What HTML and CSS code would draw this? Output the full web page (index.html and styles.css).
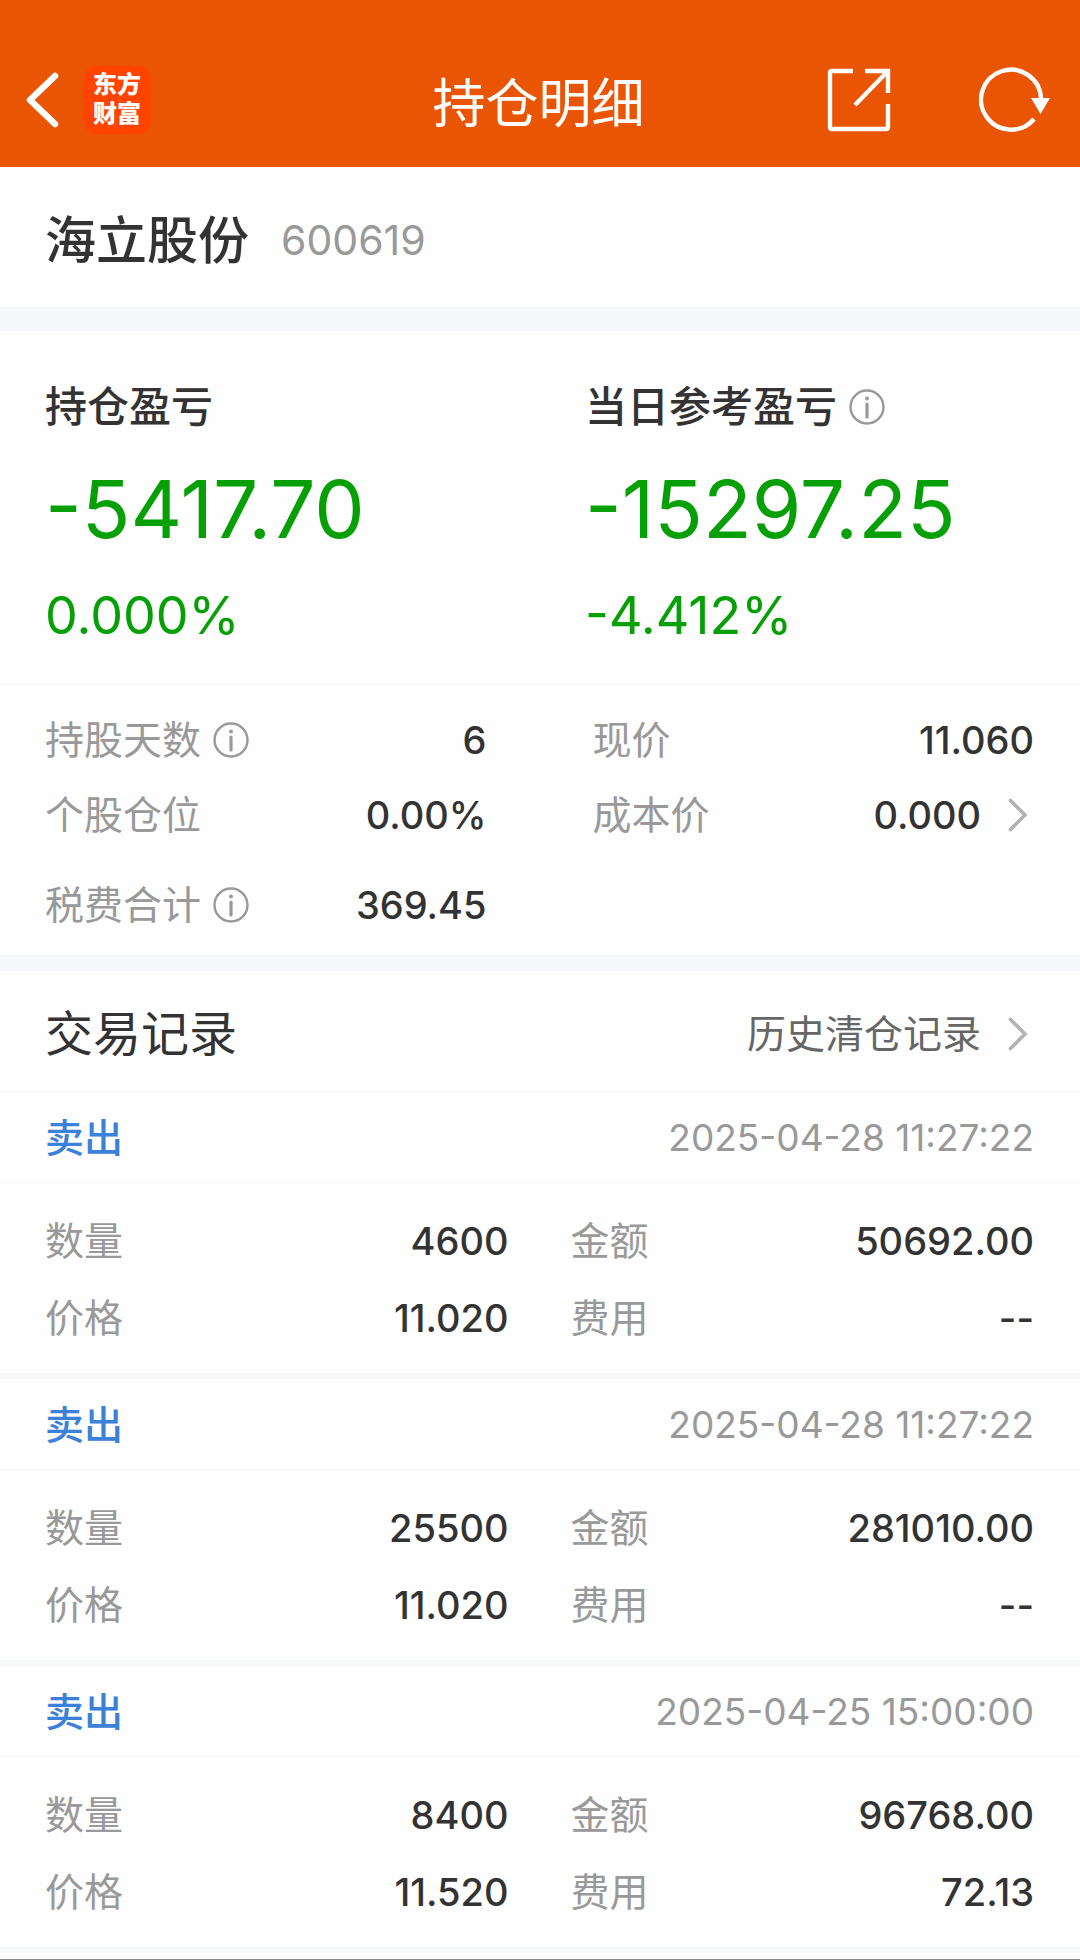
FILE: index.html
```html
<!DOCTYPE html>
<html lang="zh-CN">
<head>
    <meta charset="UTF-8">
    <meta name="viewport" content="width=device-width, initial-scale=1.0">
    <title>持仓明细</title>
    <link rel="stylesheet" href="styles.css">
</head>
<body>
    <!-- Shared icons -->
    <svg class="sprite" aria-hidden="true">
        <symbol id="icon-info" viewBox="0 0 36 36">
            <circle cx="18" cy="18" r="16.5" fill="none" stroke="currentColor" stroke-width="2.4"/>
            <circle cx="18" cy="9.5" r="2" fill="currentColor"/>
            <path d="M18 15v13" fill="none" stroke="currentColor" stroke-width="3.2" stroke-linecap="round"/>
        </symbol>
        <symbol id="icon-arrow" viewBox="0 0 20 34">
            <path d="M2.5 2.5L17 17L2.5 31.5" fill="none" stroke="currentColor" stroke-width="3.6" stroke-linecap="round"/>
        </symbol>
    </svg>

    <header class="navbar">
        <div class="nav-left">
            <button class="icon-btn" aria-label="返回">
                <svg width="34" height="56" viewBox="0 0 34 56">
                    <path d="M29 4L4 28L29 52" fill="none" stroke="#fff" stroke-width="6.5" stroke-linecap="round" stroke-linejoin="round"/>
                </svg>
            </button>
            <div class="logo">东方<br>财富</div>
        </div>
        <h1 class="nav-title">持仓明细</h1>
        <div class="nav-right">
            <button class="icon-btn" aria-label="分享">
                <svg width="64" height="64" viewBox="0 0 64 64" fill="none" stroke="#fff" stroke-width="4.4">
                    <path d="M26 3H5Q3 3 3 5V59Q3 61 5 61H59Q61 61 61 59V36"/>
                    <path d="M38 3H61V25M60 4L28 37"/>
                </svg>
            </button>
            <button class="icon-btn" aria-label="刷新">
                <svg width="72" height="66" viewBox="0 0 72 66">
                    <path d="M55 52A30 30 0 1 1 62 31" fill="none" stroke="#fff" stroke-width="4.4"/>
                    <path d="M52 31H71L61.500 47Z" fill="#fff"/>
                </svg>
            </button>
        </div>
    </header>

    <main>
        <section class="stock">
            <h2 class="stock-name">海立股份</h2>
            <span class="stock-code">600619</span>
        </section>

        <section class="summary">
            <div class="profit">
                <div class="profit-label">持仓盈亏</div>
                <div class="profit-value">-5417.70</div>
                <div class="profit-rate">0.000%</div>
            </div>
            <div class="profit">
                <div class="profit-label">当日参考盈亏
                    <button class="icon-btn info" aria-label="当日参考盈亏说明"><svg><use href="#icon-info"/></svg></button>
                </div>
                <div class="profit-value">-15297.25</div>
                <div class="profit-rate">-4.412%</div>
            </div>
        </section>

        <dl class="details">
            <div class="item">
                <dt>持股天数 <button class="icon-btn info" aria-label="持股天数说明"><svg><use href="#icon-info"/></svg></button></dt>
                <dd>6</dd>
            </div>
            <div class="item">
                <dt>现价</dt>
                <dd>11.060</dd>
            </div>
            <div class="item">
                <dt>个股仓位</dt>
                <dd>0.00%</dd>
            </div>
            <div class="item">
                <dt>成本价</dt>
                <dd><a class="more" href="#cost">0.000 <svg class="arrow"><use href="#icon-arrow"/></svg></a></dd>
            </div>
            <div class="item total">
                <dt>税费合计 <button class="icon-btn info" aria-label="税费合计说明"><svg><use href="#icon-info"/></svg></button></dt>
                <dd>369.45</dd>
            </div>
        </dl>

        <section class="records">
            <div class="records-head">
                <h2 class="records-title">交易记录</h2>
                <a class="more history" href="#history">历史清仓记录 <svg class="arrow"><use href="#icon-arrow"/></svg></a>
            </div>

            <article class="record">
                <div class="record-head">
                    <span class="side">卖出</span>
                    <time>2025-04-28 11:27:22</time>
                </div>
                <dl class="record-data">
                    <div class="item"><dt>数量</dt><dd>4600</dd></div>
                    <div class="item"><dt>金额</dt><dd>50692.00</dd></div>
                    <div class="item"><dt>价格</dt><dd>11.020</dd></div>
                    <div class="item"><dt>费用</dt><dd>--</dd></div>
                </dl>
            </article>

            <article class="record">
                <div class="record-head">
                    <span class="side">卖出</span>
                    <time>2025-04-28 11:27:22</time>
                </div>
                <dl class="record-data">
                    <div class="item"><dt>数量</dt><dd>25500</dd></div>
                    <div class="item"><dt>金额</dt><dd>281010.00</dd></div>
                    <div class="item"><dt>价格</dt><dd>11.020</dd></div>
                    <div class="item"><dt>费用</dt><dd>--</dd></div>
                </dl>
            </article>

            <article class="record">
                <div class="record-head">
                    <span class="side">卖出</span>
                    <time>2025-04-25 15:00:00</time>
                </div>
                <dl class="record-data">
                    <div class="item"><dt>数量</dt><dd>8400</dd></div>
                    <div class="item"><dt>金额</dt><dd>96768.00</dd></div>
                    <div class="item"><dt>价格</dt><dd>11.520</dd></div>
                    <div class="item"><dt>费用</dt><dd>72.13</dd></div>
                </dl>
            </article>
        </section>
    </main>

    <footer class="bottom-line"></footer>
</body>
</html>
```
FILE: styles.css
```css
* {
    box-sizing: border-box;
}

body {
    margin: 0;
    font-family: Inter, "Noto Sans CJK SC", sans-serif;
    font-size: 39px;
    line-height: 56px;
    color: #333;
    background-color: #fefefe;
}

h1, h2, dl, dd {
    margin: 0;
}

a {
    color: inherit;
    text-decoration: none;
}

.sprite {
    display: none;
}

.icon-btn {
    display: flex;
    padding: 0;
    border: none;
    background: none;
    color: inherit;
    cursor: pointer;
}

/* Top bar */
.navbar {
    display: grid;
    grid-template-columns: 1fr auto 1fr;
    align-items: center;
    padding: 33px 29px 0 26px;
    height: 167px;
    background-color: #ea5504;
    color: #fff;
}

.nav-left,
.nav-right {
    display: flex;
    align-items: center;
}

.nav-left {
    gap: 23px;
}

.nav-right {
    justify-content: flex-end;
    gap: 88px;
}

.nav-title {
    padding-top: 8px;
    font-size: 53px;
    font-weight: 400;
}

.logo {
    padding: 2px 0 8px;
    width: 68px;
    border-radius: 14px;
    background-color: #ff4400;
    font-family: "Noto Sans CJK SC", sans-serif;
    font-size: 24px;
    font-weight: 900;
    line-height: 29px;
    text-align: center;
}

/* Stock name */
.stock {
    display: flex;
    align-items: center;
    gap: 32px;
    height: 140px;
    padding: 6px 46px 0 45px;
}

.stock-name {
    padding-top: 2px;
    font-size: 51px;
    font-weight: 500;
}

.stock-code {
    font-size: 41px;
    color: #999;
}

/* Profit and loss */
.summary {
    display: grid;
    grid-template-columns: 1fr 1fr;
    padding: 48px 0 33px;
    border-top: 24px solid #f5f7fa;
    border-bottom: 1px solid #f5f5f5;
}

.profit {
    padding-left: 45px;
}

.profit-label {
    display: flex;
    align-items: center;
    gap: 12px;
    font-size: 42px;
    font-weight: 500;
}

.profit-value {
    font-size: 80px;
    line-height: 148px;
    color: #06a006;
}

.profit-rate {
    padding: 3px 0 5px;
    font-size: 52px;
    line-height: 60px;
    color: #06a006;
}

.info {
    color: #999;
}

.info svg {
    width: 36px;
    height: 36px;
}

/* Label and value pairs */
.item {
    display: flex;
    justify-content: space-between;
}

.item dt {
    display: flex;
    align-items: center;
    gap: 12px;
    color: #999;
}

.item dd {
    font-size: 38px;
    font-weight: 500;
}

.details {
    display: grid;
    grid-template-columns: 1fr 1fr;
    gap: 19px 106px;
    padding: 27px 46px 22px 45px;
    border-bottom: 16px solid #f5f7fa;
}

.total {
    margin-top: 15px;
}

.more {
    display: flex;
    align-items: center;
    gap: 27px;
    padding-right: 6px;
}

.arrow {
    width: 20px;
    height: 34px;
    color: #b2b2b2;
}

/* Trade records */
.records-head {
    display: flex;
    align-items: center;
    justify-content: space-between;
    height: 121px;
    padding: 5px 46px 0 45px;
    border-bottom: 1px solid #f5f5f5;
}

.records-title {
    font-size: 48px;
    font-weight: 400;
}

.history {
    color: #666;
}

.record {
    border-bottom: 6px solid #f5f7f9;
}

.record-head {
    display: flex;
    align-items: center;
    justify-content: space-between;
    padding: 18px 46px 16px 45px;
    border-bottom: 1px solid #f5f5f5;
}

.side {
    font-weight: 500;
    color: #3b80d9;
}

.record-head time {
    font-size: 37px;
    color: #999;
}

.record-data {
    display: grid;
    grid-template-columns: 1fr 1fr;
    gap: 21px 62px;
    padding: 30px 46px 27px 45px;
}

.bottom-line {
    height: 7px;
    border-bottom: 1px solid #888;
}
```
